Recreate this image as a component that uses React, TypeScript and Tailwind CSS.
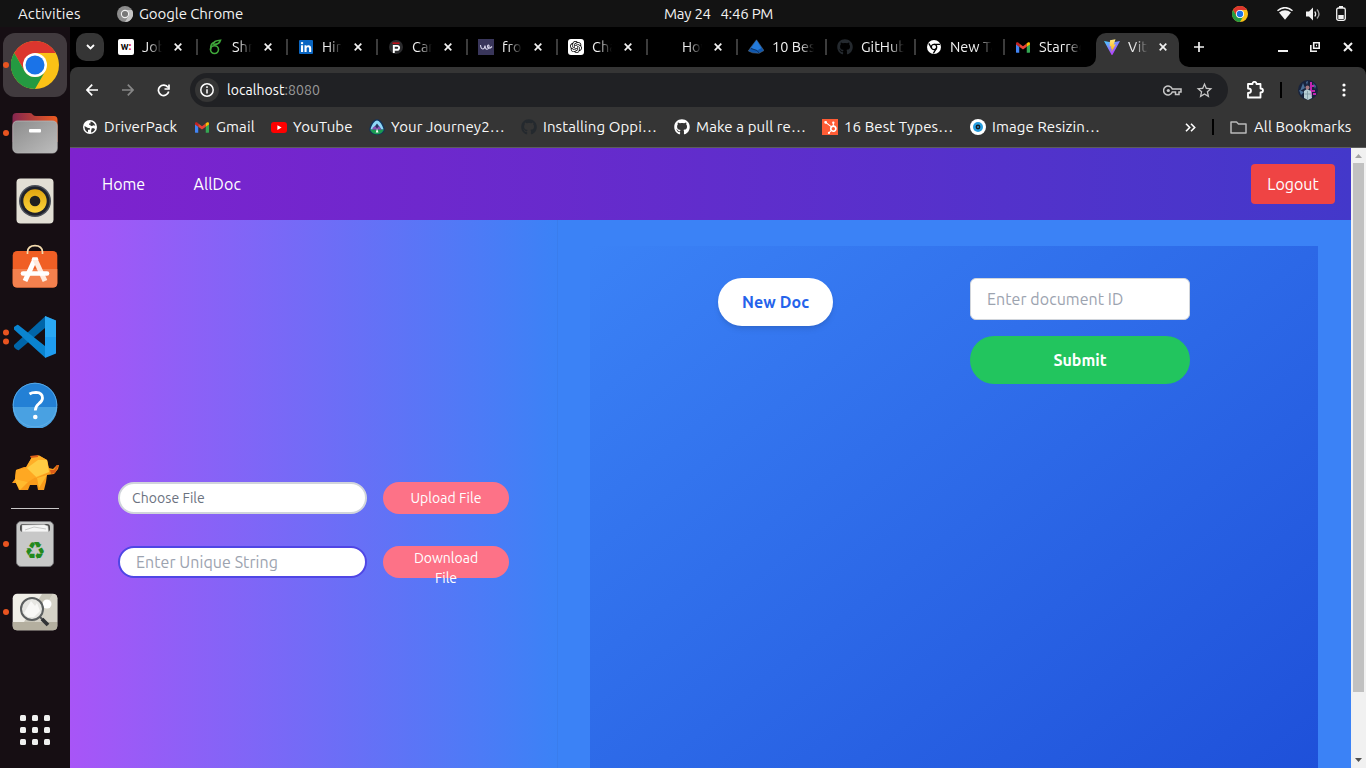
import React from "react";
import { SiOpenai, SiHubspot } from "react-icons/si";
import { FaGithub } from "react-icons/fa";
import { MdOutlineStarBorder } from "react-icons/md";

const VscIcon = () => (
  <svg className="h-[44px] w-[44px]" viewBox="0 0 44 44">
    <path d="M1 30 32 1.500V13L6 35Q4 36 1 32Z" fill="#0065a9" />
    <path d="M1 12 4 10Q5 9.500 6 10.500L32 31V42.500L1 14.500Z" fill="#0a84d0" />
    <path d="M32 1 43 5.500V38.500L32 43Z" fill="#1f9cf0" />
    <path d="M32 1 43 5.500V22H32Z" fill="#32b0f6" opacity=".6" />
  </svg>
);

function ChromeLogo({ className }: { className: string }) {
  return (
    <svg className={className} viewBox="0 0 48 48">
      <circle cx="24" cy="24" r="24" fill="#fbc116" />
      <path d="M3.200 12A24 24 0 0 1 44.800 12H24L13.600 30Z" fill="#dc362e" />
      <path d="M3.200 12A24 24 0 0 0 24 48L34.400 30A12 12 0 0 1 13.600 30Z" fill="#249a41" />
      <circle cx="24" cy="24" r="12" fill="#fff" />
      <circle cx="24" cy="24" r="9.500" fill="#1a73e8" />
    </svg>
  );
}

function GmailLogo({ className }: { className: string }) {
  return (
    <svg className={className} viewBox="0 0 16 12">
      <path d="M0 1.500V11a1 1 0 0 0 1 1h2.700V5Z" fill="#4285f4" />
      <path d="M16 1.500V11a1 1 0 0 1-1 1h-2.700V5Z" fill="#34a853" />
      <path d="M3.700 5V1.300L8 4.500l4.300-3.200V5L8 8.300Z" fill="#ea4335" />
      <path d="M0 1.500C0 .2 1.500-.4 2.600.4l1.100.9V5L0 2.500Z" fill="#c5221f" />
      <path d="M16 1.500C16 .2 14.500-.4 13.400.4l-1.100.9V5L16 2.500Z" fill="#fbbc04" />
    </svg>
  );
}

const ViteLogo = () => (
  <svg className="h-4 w-4" viewBox="0 0 16 16">
    <defs>
      <linearGradient id="v1" x1="0" y1="0" x2=".6" y2="1">
        <stop stopColor="#41d1ff" />
        <stop offset="1" stopColor="#bd34fe" />
      </linearGradient>
      <linearGradient id="v2" x1="0" y1="0" x2="0" y2="1">
        <stop stopColor="#ffea83" />
        <stop offset="1" stopColor="#ffa800" />
      </linearGradient>
    </defs>
    <path d="M0 2 8 3.500 16 2 8.500 15.700Q8 16.200 7.500 15.700Z" fill="url(#v1)" />
    <path d="M11.500.2 6 1.200 5.600 7.500 7.300 7.200 6.600 9.800 8 9.400 7.500 13 11.800 5.300 9.700 5.700Z" fill="url(#v2)" />
  </svg>
);

const CloseX = () => (
  <svg className="h-2 w-2 shrink-0" viewBox="0 0 8 8">
    <path d="M.7.7 7.300 7.300M7.300.7.7 7.300" stroke="#f1f1f1" strokeWidth="1.700" />
  </svg>
);

const Logos = {
  w: (
    <span className="flex h-4 w-4 items-center justify-center rounded-[2px] bg-white text-[10px] font-bold leading-none text-black">
      w<span className="text-red-600">:</span>
    </span>
  ),
  six: (
    <svg className="h-4 w-4" viewBox="0 0 16 16" fill="none" stroke="#3fa83a" strokeWidth="1.600">
      <ellipse cx="6.500" cy="10.600" rx="4" ry="3.900" />
      <path d="M2.600 10.500C2.400 6 4.500 3.500 7 3M5 5.500C5.500 2.500 8.500 1.300 12.500 1.200 11.500 4.500 8.500 5.500 5.500 5.300" />
    </svg>
  ),
  linkedin: (
    <svg className="h-[14px] w-[14px]" viewBox="0 0 14 14">
      <rect width="14" height="14" rx="1" fill="#0a66c2" />
      <path d="M2 5.300h2.100V12H2ZM5.500 5.300h2v1c.8-1.500 4.700-1.900 4.700 1.900V12h-2.100V8.600c0-2-2.500-1.800-2.500 0V12H5.500Z" fill="#fff" />
      <circle cx="3.050" cy="3.100" r="1.200" fill="#fff" />
    </svg>
  ),
  p: (
    <svg className="h-[14px] w-[14px]" viewBox="0 0 14 14">
      <circle cx="7" cy="7" r="7" fill="#2c2c2e" />
      <path d="M3.500 2.500h7v1.300h-7Z" fill="#e50914" />
      <path d="M4.800 13V5.900H8.200a1.900 1.900 0 0 1 0 3.900H5" fill="none" stroke="#fff" strokeWidth="1.900" />
    </svg>
  ),
  we: (
    <svg className="h-4 w-4" viewBox="0 0 16 16">
      <path d="M0 0H16V16H0Z" fill="#39365b" />
      <path d="M2.500 6C3 11.300 6.500 11 7 6.500 7.300 11.500 10.300 11 11 8 11.500 5.500 9.500 5.500 9.500 7.500 9.500 9.500 11.500 10 14 7.500" fill="none" stroke="#d9d7ed" strokeWidth="1.100" />
    </svg>
  ),
  gpt: (
    <span className="flex h-4 w-4 items-center justify-center rounded-[3px] bg-white">
      <SiOpenai className="h-3 w-3 text-black" />
    </span>
  ),
  none: null,
  blue: (
    <svg className="h-4 w-4" viewBox="0 0 16 16">
      <path d="M8.500.8 13.500 8 16 11.500 11 14.300 4.500 13.800.3 12 3 8Z" fill="#0f57ad" stroke="#687684" strokeWidth=".5" />
      <path d="M8.500 1.300 13.500 9 9 11.500 3 9Z" fill="#247bdc" />
      <path d="M3 9.500 9 11.500 11 14" fill="none" stroke="#0a3268" />
    </svg>
  ),
  darkGit: <FaGithub className="h-4 w-4 text-[#24292e]" />,
  git: <FaGithub className="h-4 w-4 text-white" />,
  chrome: (
    <svg className="h-[14px] w-[14px]" viewBox="0 0 14 14">
      <circle cx="7" cy="7" r="7" fill="#fff" />
      <circle cx="7" cy="7" r="2.700" fill="#fff" stroke="#000" strokeWidth="1.300" />
      <path d="M7 4.300h6M4.700 8.400 1.800 3.400M9.300 8.400 6.400 13.400" stroke="#000" strokeWidth="1.300" />
    </svg>
  ),
  gmail: <GmailLogo className="h-[11px] w-[14px]" />,
  youtube: (
    <svg className="h-[11px] w-4" viewBox="0 0 16 11">
      <rect width="16" height="11" rx="3" fill="#f00" />
      <path d="M6.400 3.200 10.600 5.500 6.400 7.900Z" fill="#fff" />
    </svg>
  ),
  globe: (
    <svg className="h-[14px] w-[14px]" viewBox="0 0 14 14">
      <circle cx="7" cy="7" r="7" fill="#fff" />
      <path d="M7.500 1.600C10 2 11.800 3.500 12.300 5.800L10.500 5.200 9 6 7.500 5.800V4.800H6V3.500H7.500Z" fill="#353535" />
      <path d="M1.500 6 5 8H6.800V9.800H5V12.200C3 11.500 1.300 9.500 1.500 6Z" fill="#353535" />
      <path d="M8.800 8.200H11L12 9.200C11.300 11 9.800 12.200 8 12.500L8.200 10.500Z" fill="#353535" />
    </svg>
  ),
  camp: (
    <svg className="h-4 w-4" viewBox="0 0 16 16">
      <path d="M8 .3C12 .3 15.700 7 15.700 11 15 14.500 11 15.700 8 15.700S1 14.500.3 11C.3 7 4 .3 8 .3Z" fill="#12345c" />
      <path d="M1.500 10.500C2.500 6 5.500 1.500 8 1.500S13.500 6 14.500 10.500Z" fill="#8ed8f8" />
      <path d="M8 4.500 12.500 10.500H3.500Z" fill="#29345f" />
      <path d="M4 8.500 6 7 8 9.500 10 7 12.500 10.500H3Z" fill="#8b4fb0" />
      <path d="M1 10.700H15Q12.500 15.300 8 15.300 3.500 15.300 1 10.700Z" fill="#1b9b51" />
      <path d="M8 9.500 9.500 13.500H6.800Z" fill="#fff" />
    </svg>
  ),
  hub: (
    <span className="flex h-4 w-4 items-center justify-center bg-[#ff5c35]">
      <SiHubspot className="h-[13px] w-[13px] text-white" />
    </span>
  ),
  eye: (
    <svg className="h-4 w-4" viewBox="0 0 16 16">
      <circle cx="8" cy="8" r="8" fill="#fff" />
      <circle cx="8" cy="8" r="5" fill="#249bdd" />
      <circle cx="8" cy="8" r="2.400" fill="#17191f" />
      <circle cx="8" cy="8" r=".9" fill="#249bdd" />
    </svg>
  ),
};

type LogoName = keyof typeof Logos;

const tabs: { icon: LogoName; label: string; close?: boolean; box: string; text: string }[] = [
  { icon: "w", label: "Job", close: true, box: "w-[90px]", text: "w-5" },
  { icon: "six", label: "Shr", close: true, box: "w-[90px]", text: "w-5" },
  { icon: "linkedin", label: "Hire", close: true, box: "w-[90px]", text: "w-5" },
  { icon: "p", label: "Car", close: true, box: "w-[90px]", text: "w-5" },
  { icon: "we", label: "fron", close: true, box: "w-[90px]", text: "w-5" },
  { icon: "gpt", label: "Cha", close: true, box: "w-[90px]", text: "w-5" },
  { icon: "none", label: "How", close: true, box: "w-[90px]", text: "w-5" },
  { icon: "blue", label: "10 Best", box: "w-[89px]", text: "w-[42px]" },
  { icon: "darkGit", label: "GitHub", box: "w-[89px]", text: "w-[43px]" },
  { icon: "chrome", label: "New Tab", box: "w-[89px]", text: "w-[42px]" },
  { icon: "gmail", label: "Starred", box: "w-[89px]", text: "w-[42px]" },
];

const bookmarks: { icon: LogoName; label: string; box: string }[] = [
  { icon: "globe", label: "DriverPack", box: "w-[112px]" },
  { icon: "gmail", label: "Gmail", box: "w-[77px]" },
  { icon: "youtube", label: "YouTube", box: "w-[98px]" },
  { icon: "camp", label: "Your Journey2…", box: "w-[152px]" },
  { icon: "darkGit", label: "Installing Oppi…", box: "w-[153px]" },
  { icon: "git", label: "Make a pull re…", box: "w-[148px]" },
  { icon: "hub", label: "16 Best Types…", box: "w-[148px]" },
  { icon: "eye", label: "Image Resizin…", box: "w-[140px]" },
];

function TopBar() {
  return (
    <div className="flex h-[27px] shrink-0 items-center bg-[#131313] text-[15px] leading-none text-[#f2f2f2]">
      <span className="ml-[18px] w-[99px] tracking-[0.1px]">Activities</span>
      <svg className="h-4 w-4" viewBox="0 0 16 16">
        <circle cx="8" cy="8" r="8" fill="#8c8c8c" />
        <path d="M8 4H15A8 8 0 0 1 8 16L11.500 10Z" fill="#c4c4c4" />
        <circle cx="8" cy="8" r="3.600" fill="#777" stroke="#f0f0f0" strokeWidth="1.100" />
      </svg>
      <span className="ml-[6px] w-[525px] tracking-[-0.08px]">Google Chrome</span>
      <span className="whitespace-pre tracking-[-0.25px]">May 24{"   "}4:46 PM</span>
      <div className="ml-auto flex items-center pr-[20px]">
        <ChromeLogo className="mr-[29px] h-4 w-4" />
        <svg className="mr-[13px] h-[13px] w-4" viewBox="0 0 16 13">
          <path d="M.5 3.800Q8-2.500 15.500 3.800" fill="none" stroke="#f2f2f2" strokeWidth="1.500" />
          <path d="M2 5.500Q8 1 14 5.500L8 12.800Z" fill="#f2f2f2" />
        </svg>
        <svg className="mr-[15px] h-[14px] w-[15px]" viewBox="0 0 15 14">
          <path d="M0 4.500H3L7 .5V13.500L3 9.500H0Z" fill="#f2f2f2" />
          <path d="M8.800 4.500Q10.500 7 8.800 9.500" fill="none" stroke="#f2f2f2" strokeWidth="1.300" />
          <path d="M11 2.500Q15 7 11 11.500" fill="none" stroke="#a0a0a0" strokeWidth="1.400" />
        </svg>
        <svg className="h-[15px] w-[10px]" viewBox="0 0 10 15">
          <path d="M3 0H7V2H3Z" fill="#f2f2f2" />
          <rect x=".7" y="2" width="8.600" height="12.300" rx="1.800" fill="none" stroke="#f2f2f2" strokeWidth="1.300" />
          <path d="M2.300 9H7.700V13H2.300Z" fill="#f2f2f2" />
        </svg>
      </div>
    </div>
  );
}

function DockItem({ dots = 0, active = false, children }: { dots?: number; active?: boolean; children: React.ReactNode }) {
  return (
    <div className="flex h-[68px] w-[70px] shrink-0 items-center pl-[3px]">
      <div className={"relative flex h-16 w-16 items-center justify-center rounded-[12px] " + (active ? "bg-[#413a3e]" : "")}>
        {children}
        <div className="absolute left-0 top-1/2 flex -translate-y-1/2 flex-col gap-[3px]">
          {Array.from({ length: dots }, (_, i) => (
            <span key={i} className="h-[6px] w-[6px] rounded-full bg-[#e95420]" />
          ))}
        </div>
      </div>
    </div>
  );
}

function Dock() {
  return (
    <aside className="flex w-[70px] shrink-0 flex-col bg-[#160e13] pt-[4px]">
      <DockItem dots={1} active>
        <ChromeLogo className="h-12 w-12" />
      </DockItem>
      <DockItem dots={1}>
        <svg className="h-[42px] w-[46px]" viewBox="0 0 46 42">
          <defs>
            <linearGradient id="fold" x1="0" x2="1"><stop stopColor="#84264f" /><stop offset="1" stopColor="#ed5b20" /></linearGradient>
            <linearGradient id="foldg" x1="0" x2="1" y2="1"><stop stopColor="#8c8c8c" /><stop offset="1" stopColor="#bdbdbd" /></linearGradient>
          </defs>
          <path d="M.5 5Q.5 1 4.500 1H18Q20 1 21 3 22 4 24 4H42Q45.500 4 45.500 8V30H.5Z" fill="url(#fold)" />
          <rect x=".8" y="9" width="44.400" height="32" rx="4.500" fill="url(#foldg)" stroke="#b6b6b6" strokeWidth=".8" />
          <rect x="17" y="17" width="12" height="3.500" rx="1" fill="#fff" />
        </svg>
      </DockItem>
      <DockItem>
        <svg className="h-[46px] w-[38px]" viewBox="0 0 38 46">
          <defs>
            <linearGradient id="cone" x1="0" x2="0" y2="1"><stop stopColor="#e0a50f" /><stop offset="1" stopColor="#fbd33c" /></linearGradient>
          </defs>
          <rect x=".5" y=".5" width="37" height="45" rx="4" fill="#e2dfd5" />
          <circle cx="19" cy="23" r="16" fill="#4b5059" />
          <circle cx="19" cy="23" r="14.500" fill="#1f222b" />
          <circle cx="19" cy="23" r="11.700" fill="url(#cone)" />
          <circle cx="19" cy="23" r="5.300" fill="#202020" />
        </svg>
      </DockItem>
      <DockItem>
        <svg className="h-[46px] w-[46px] overflow-visible" viewBox="0 3 46 46">
          <rect x=".7" y="8" width="44.600" height="36.500" rx="4.500" fill="#f05f25" />
          <path d="M.7 26H45.300V40Q45.300 44.500 41 44.500H5Q.7 44.500.7 40Z" fill="#f3804e" />
          <path d="M15.500 11V9Q16 2.700 23 2.700 30 2.700 30.500 9V11" fill="none" stroke="#f4dbae" strokeWidth="1.700" />
          <path d="M13 38 23 16" stroke="#fff" strokeWidth="5" />
          <path d="M23 16 33 38" stroke="#ffeade" strokeWidth="5" />
          <path d="M20.500 14.200H25.500L26.500 17H19.500Z" fill="#fff" />
          <path d="M11 30.500H35" stroke="#fff" strokeWidth="4.600" strokeLinecap="round" />
        </svg>
      </DockItem>
      <DockItem dots={2}><VscIcon /></DockItem>
      <DockItem>
        <svg className="h-[46px] w-[46px]" viewBox="0 0 46 46">
          <circle cx="23" cy="23" r="22.300" fill="#2380d5" />
          <path d="M.7 25H45.300A22.300 22.300 0 0 1 .7 25Z" fill="#49a1e2" />
          <circle cx="23" cy="23" r="21.800" fill="none" stroke="#63b1e8" strokeWidth=".8" />
          <path d="M17.500 12Q20 10.300 24 10.300 30.500 10.500 30.500 16 30.500 19 27 21.500 23.300 24.500 23.300 28.500" fill="none" stroke="#fff" strokeWidth="2.800" />
          <circle cx="23.300" cy="35" r="2.300" fill="#fff" />
        </svg>
      </DockItem>
      <DockItem>
        <svg className="h-[36px] w-12" viewBox="0 0 48 36">
          <path d="M5 15 13 12H15L21 2 28 .5 36 5 38 13 42 14 46 10H48L47 14 43 19 36 20 35 27 33 35H27L26 30H19L17 35H8L5 28 1 28 4 24Z" fill="#f99b1b" />
          <path d="M15 13 21 2 28 .5 36 5 38 17 25 23Z" fill="#ffae27" />
          <path d="M27 5 36 5 38 17 25 22 16 13Z" fill="#ffcc43" />
          <path d="M5 15 15 13 25 22 17 27 4 24Z" fill="#ffa822" />
          <path d="M4 24 17 27 9 35 5 28ZM26 23 36 20 28 33Z" fill="#ffba2e" />
          <path d="M39 15 43 15 46 10H48L44 18 40 19ZM19 1 27 0V2L20 3Z" fill="#db5d18" />
        </svg>
      </DockItem>
      <div className="ml-[11px] mt-[0.5px] h-[1px] w-12 shrink-0 bg-[#c9c7c8]" />
      <div className="mt-[1.5px] flex shrink-0 flex-col">
        <DockItem dots={1}>
          <span className="relative flex h-[46px] w-[38px] items-center justify-center rounded-[5px] border border-[#77777a] bg-[#c8c8c8]">
            <svg className="absolute left-[3px] top-[2px] h-[8px] w-[30px]" viewBox="0 0 30 8">
              <rect width="30" height="8" rx="3" fill="#4a4a4a" />
              <path d="M2 1 24 .5 28 2 28.500 8H2Z" fill="#f5f5f5" stroke="#aaa" strokeWidth=".5" />
              <path d="M5 6 14 3 26 5" fill="none" stroke="#aaa" strokeWidth=".6" />
            </svg>
            <span className="mt-[14px] font-['DejaVu_Sans'] text-[24px] leading-none text-[#23891d]">♻</span>
          </span>
        </DockItem>
        <DockItem dots={1}>
          <svg className="h-[38px] w-[46px]" viewBox="0 0 46 38">
            <rect x=".7" y=".7" width="44.600" height="36.600" rx="4.500" fill="#f0eee7" />
            <path d="M45.300 5V29H23L41 1Q45.300 1 45.300 5Z" fill="#d5d2c7" />
            <path d="M30 1H41L23 29H12Z" fill="#c8c5b8" />
            <path d="M.7 29H45.300V33Q45.300 37.300 41 37.300H5Q.7 37.300.7 33Z" fill="#b4af9f" />
            <circle cx="35" cy="11" r="4.500" fill="#fff" />
            <circle cx="20" cy="16" r="11" fill="#e6e6e2" stroke="#5c5f60" strokeWidth="2" />
            <path d="M12 20 19 8 23 13 25 10 28 18 22 24H16Z" fill="#fff" opacity=".7" />
            <path d="M28 24 31 27" stroke="#515355" strokeWidth="2" />
            <path d="M30 26 36 32" stroke="#313335" strokeWidth="3.800" />
          </svg>
        </DockItem>
      </div>
      <div className="mb-[23px] ml-[20px] mt-auto grid w-[30px] grid-cols-3 gap-[6px]">
        {Array.from({ length: 9 }, (_, i) => (
          <span key={i} className="h-[6px] w-[6px] rounded-[1.5px] bg-[#f0f0f0]" />
        ))}
      </div>
    </aside>
  );
}

function TabStrip() {
  return (
    <div className="flex h-10 shrink-0 items-center bg-black text-[14.5px] leading-none text-[#f1f1f1]">
      <div className="ml-[6px] mr-[4px] flex h-7 w-7 shrink-0 items-center justify-center rounded-[10px] bg-[#353535]">
        <svg className="h-[6px] w-[9px]" viewBox="0 0 9 6"><path d="M1 1 4.500 4.500 8 1" fill="none" stroke="#fff" strokeWidth="1.800" /></svg>
      </div>
      {tabs.map((t, i) => (
        <div key={t.label} className={"flex h-full shrink-0 items-center " + t.box}>
          <span className="ml-[10px] flex w-4 shrink-0 justify-center">{Logos[t.icon]}</span>
          <span className={"ml-2 overflow-hidden whitespace-nowrap py-1 [mask-image:linear-gradient(to_right,black_calc(100%-14px),transparent)] " + t.text}>
            {t.label}
          </span>
          {t.close && <span className="ml-[12px] flex"><CloseX /></span>}
          {i < tabs.length - 1 && <span className="ml-auto mr-[0.5px] h-4 w-[1.5px] shrink-0 bg-[#3c3c3c]" />}
        </div>
      ))}
      <div className="relative ml-[2px] flex h-[34px] w-[83px] shrink-0 items-center self-end rounded-t-[10px] bg-[#353535] pb-[6px]">
        <svg className="absolute -left-[10px] bottom-0 h-[10px] w-[10px]" viewBox="0 0 10 10"><path d="M10 0V10H0A10 10 0 0 0 10 0Z" fill="#353535" /></svg>
        <svg className="absolute -right-[10px] bottom-0 h-[10px] w-[10px]" viewBox="0 0 10 10"><path d="M0 0V10H10A10 10 0 0 1 0 0Z" fill="#353535" /></svg>
        <span className="ml-2"><ViteLogo /></span>
        <span className="ml-2 w-5 overflow-hidden whitespace-nowrap py-1 [mask-image:linear-gradient(to_right,black_6px,transparent)]">Vite</span>
        <span className="ml-[11px] flex"><CloseX /></span>
      </div>
      <svg className="ml-[15px] h-[10px] w-[10px] shrink-0" viewBox="0 0 10 10"><path d="M5 0V10M0 5H10" stroke="#f1f1f1" strokeWidth="1.700" /></svg>
      <svg className="ml-[74px] h-[10px] w-[10px] shrink-0" viewBox="0 0 10 10"><path d="M0 9H10" stroke="#f1f1f1" strokeWidth="2" /></svg>
      <svg className="ml-[22px] h-[10px] w-[10px] shrink-0" viewBox="0 0 10 10"><path d="M3.700.8H9.200V6.300H3.700ZM.8 3V9.200H7M6 3.500H7" fill="none" stroke="#f1f1f1" strokeWidth="1.600" /></svg>
      <svg className="ml-[23px] h-[10px] w-[10px] shrink-0" viewBox="0 0 10 10"><path d="M1 1 9 9M9 1 1 9" stroke="#f1f1f1" strokeWidth="2" /></svg>
    </div>
  );
}

function AddressBar() {
  return (
    <div className="flex h-[46px] shrink-0 items-center rounded-t-[8px] bg-[#353535] text-[14px]">
      <svg className="ml-[16px] h-3 w-3" viewBox="0 0 12 12"><path d="M6.200.7 1 6 6.200 11.300M1 6H12" fill="none" stroke="#fff" strokeWidth="1.700" /></svg>
      <svg className="ml-[24px] h-3 w-3" viewBox="0 0 12 12"><path d="M5.800.7 11 6 5.800 11.300M11 6H0" fill="none" stroke="#868686" strokeWidth="1.700" /></svg>
      <svg className="ml-[23px] h-[13px] w-[13px]" viewBox="0 0 13 13"><path d="M11 3.500A5.200 5.200 0 1 0 11.700 7.500M12 .5V5H7.500" fill="none" stroke="#fff" strokeWidth="1.700" /></svg>
      <div className="ml-[20px] flex h-[34px] w-[1038px] items-center rounded-full bg-[#202124]">
        <span className="ml-[5px] flex h-6 w-6 items-center justify-center rounded-full bg-[#353535]">
          <svg className="h-[14px] w-[14px]" viewBox="0 0 14 14"><circle cx="7" cy="7" r="6.200" fill="none" stroke="#fff" strokeWidth="1.500" /><path d="M7 6.200V10.500M7 3.300V5" stroke="#fff" strokeWidth="1.500" /></svg>
        </span>
        <span className="ml-2 tracking-[0.07px] text-white">localhost<span className="text-[#9a9a9a]">:8080</span></span>
        <svg className="ml-auto h-[11px] w-[19px]" viewBox="0 0 19 11"><path d="M9.300 4A4.500 4.500 0 1 0 9.300 7H12.500V9.500H16V7H18V4Z" fill="none" stroke="#c6c6c6" strokeWidth="1.500" /><circle cx="5.300" cy="5.500" r="1.600" fill="#c6c6c6" /></svg>
        <MdOutlineStarBorder className="ml-[13px] mr-[14px] h-[19px] w-[19px] text-[#c6c6c6]" />
      </div>
      <svg className="ml-[18px] h-[18px] w-[18px]" viewBox="0 0 18 18"><path d="M2 3H6.500Q6.500.8 8.500.8 10.500.8 10.500 3H14.500V7.500Q17 7.500 17 9.500 17 11.500 14.500 11.500V16.500H2V12Q5 12 5 9.700 5 7.500 2 7.500Z" fill="none" stroke="#fff" strokeWidth="1.800" strokeLinejoin="round" /></svg>
      <span className="ml-[16px] h-4 w-[2px] bg-black" />
      <svg className="ml-[16px] h-5 w-5" viewBox="0 0 20 20">
        <circle cx="10" cy="10" r="10" fill="#18233d" />
        <path d="M2 11 5 3 7 8ZM3 15 1 10 6 12ZM15 3 18 6 17 9ZM8 2 10 1 9 5Z" fill="#4a6f96" />
        <path d="M12 2H14V5H16V7H14V10H17V12H14V16H12ZM15 13H18V15H15Z" fill="#c024b0" />
        <path d="M6 11 9 9 13 11 14 18 10 20 6 18Z" fill="#b7ced5" />
        <path d="M9.500 11V19M6.500 14H13" stroke="#7c98a3" strokeWidth=".8" />
        <circle cx="9.500" cy="7.500" r="2" fill="#a37780" />
      </svg>
      <svg className="ml-[24px] h-[14px] w-[4px]" viewBox="0 0 4 14"><circle cx="2" cy="2" r="1.600" fill="#fff" /><circle cx="2" cy="7" r="1.600" fill="#fff" /><circle cx="2" cy="12" r="1.600" fill="#fff" /></svg>
    </div>
  );
}

function BookmarksBar() {
  return (
    <div className="flex h-[35px] shrink-0 items-center border-b border-[#5c5c5c] bg-[#353535] pl-[12px] text-[15px] leading-none tracking-[0.1px] text-[#f8f8f8]">
      {bookmarks.map((b) => (
        <div key={b.label} className={"flex shrink-0 items-center whitespace-nowrap pb-[6px] " + b.box}>
          <span className="flex w-4 shrink-0 justify-center">{Logos[b.icon]}</span>
          <span className="ml-[6px] pb-[2px]">{b.label}</span>
        </div>
      ))}
      <div className="ml-auto flex items-center pb-[6px]">
        <svg className="h-[9px] w-[11px]" viewBox="0 0 11 9"><path d="M1 .7 4.700 4.500 1 8.300M6 .7 9.700 4.500 6 8.300" fill="none" stroke="#fff" strokeWidth="1.600" /></svg>
        <span className="ml-[16px] h-4 w-[2px] bg-black" />
        <svg className="ml-[16px] h-[13px] w-[17px]" viewBox="0 0 17 13"><path d="M1 1H6.500L8.500 3H16V12H1Z" fill="none" stroke="#b9b9b9" strokeWidth="1.500" strokeLinejoin="round" /></svg>
        <span className="ml-[7px] w-[112px] whitespace-nowrap pb-[2px]">All Bookmarks</span>
      </div>
    </div>
  );
}

function Page() {
  return (
    <div className="flex min-h-0 flex-1">
      <div className="flex min-w-0 flex-1 flex-col overflow-hidden bg-[#3b82f6] text-[16px]">
        <nav className="flex h-[72px] shrink-0 items-center bg-[linear-gradient(to_right,#7e22ce,#4338ca)] pl-8 pr-4 text-white">
          <a className="w-[91.5px]">Home</a>
          <a className="tracking-[0.1px]">AllDoc</a>
          <button className="ml-auto h-10 w-[84px] rounded-[4px] bg-[#ef4444]">Logout</button>
        </nav>
        <div className="flex min-h-0 flex-1">
          <section className="flex w-[488px] shrink-0 flex-col gap-8 border-r border-[#3a7dec] bg-[linear-gradient(to_right,#a855f7,#3b82f6)] px-12 pt-[262px]">
            <div className="flex gap-4">
              <label className="flex h-8 w-[249px] shrink-0 items-center rounded-full border-2 border-[#d1d5db] bg-white pl-3 text-[14px] tracking-[0.07px] text-[#6b7280]">Choose File</label>
              <button className="h-8 w-[126px] shrink-0 rounded-full bg-[#fd7287] text-[14px] leading-5 tracking-[0.07px] text-white">Upload File</button>
            </div>
            <div className="flex gap-4">
              <input className="h-8 w-[249px] shrink-0 rounded-full border-2 border-[#4f46e5] bg-white pl-4 tracking-[0.06px] placeholder:text-[#9ca3af]" placeholder="Enter Unique String" />
              <button className="h-8 w-[126px] shrink-0 rounded-full bg-[#fd7287] px-6 pt-[2px] text-[14px] leading-5 text-white">Download File</button>
            </div>
          </section>
          <section className="min-w-0 flex-1 pl-8 pr-[33px] pt-[26px]">
            <div className="flex h-[570px] items-start bg-[linear-gradient(to_bottom_right,#3b82f6,#1d4ed8)] pt-8">
              <button className="ml-32 h-12 w-[115px] shrink-0 rounded-full bg-white font-bold tracking-[0.08px] text-[#2563eb] shadow-md">New Doc</button>
              <div className="ml-[137px] flex w-[220px] shrink-0 flex-col gap-4">
                <input className="h-[42px] w-full rounded-[6px] border border-[#d1d5db] bg-white px-4 tracking-[0.06px] placeholder:text-[#9ca3af]" placeholder="Enter document ID" />
                <button className="h-12 rounded-full bg-[#22c55e] font-bold text-white">Submit</button>
              </div>
            </div>
          </section>
        </div>
      </div>
      <div className="flex w-[15px] shrink-0 flex-col items-center bg-[#f1f1f1]">
        <svg className="mt-[6px] h-[4px] w-[7px] shrink-0" viewBox="0 0 7 4"><path d="M0 4 3.500 0 7 4Z" fill="#a3a3a3" /></svg>
        <div className="mt-[5px] h-[529px] w-[11px] bg-[#c1c1c1]" />
        <svg className="mb-[6px] mt-auto h-[4px] w-[7px] shrink-0" viewBox="0 0 7 4"><path d="M0 0 3.500 4 7 0Z" fill="#505050" /></svg>
      </div>
    </div>
  );
}

export default function App() {
  return (
    <div className="flex h-[768px] w-[1366px] flex-col overflow-hidden bg-black font-['Ubuntu','Noto_Sans',sans-serif]">
      <TopBar />
      <div className="flex min-h-0 flex-1">
        <Dock />
        <main className="flex min-w-0 flex-1 flex-col">
          <TabStrip />
          <AddressBar />
          <BookmarksBar />
          <Page />
        </main>
      </div>
    </div>
  );
}
